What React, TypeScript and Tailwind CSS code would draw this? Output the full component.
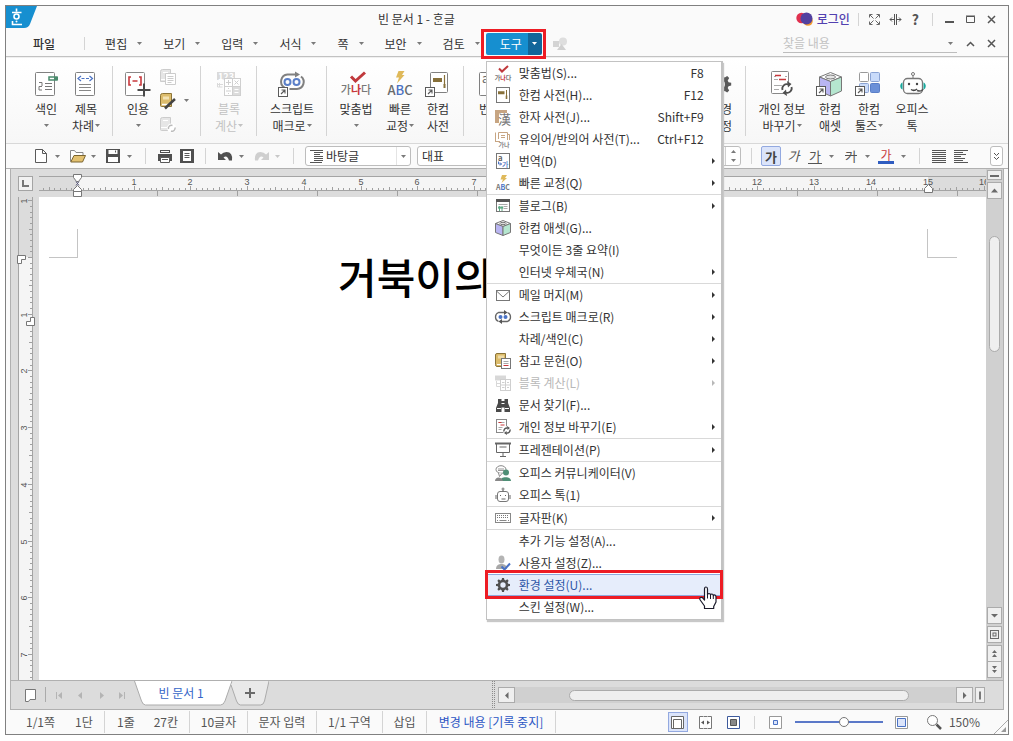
import type { ReactNode } from "react";

const INK = "#5a5a5a";

/* ---------- small shared pieces ---------- */

function Caret({ className = "text-[#7a7a7a]" }: { className?: string }) {
  return (
    <svg viewBox="0 0 5 3" className={`h-[3px] w-[5px] shrink-0 ${className}`}>
      <path d="M0 0h5L2.500 3z" fill="currentColor" />
    </svg>
  );
}

function Svg({ size = 16, children }: { size?: 16 | 28; children: ReactNode }) {
  return (
    <svg
      viewBox={size === 16 ? "0 0 16 16" : "0 0 28 28"}
      className={size === 16 ? "size-4 shrink-0 overflow-visible" : "size-7 shrink-0 overflow-visible"}
      fill="none"
      stroke={INK}
      fontFamily="Noto Sans CJK KR, sans-serif"
    >
      {children}
    </svg>
  );
}

function Shortcut({ x = 0.5, y = 16.5 }: { x?: number; y?: number }) {
  return (
    <g>
      <rect x={x} y={y} width="9" height="9" fill="#fff" />
      <path d={`M${x + 2.5} ${y + 6.5}l4-4m-3.500 0h3.500v3.500`} strokeWidth="1.1" />
    </g>
  );
}

function Rule({ className = "h-[70px] self-start mt-2" }: { className?: string }) {
  return <div className={`w-px shrink-0 bg-[#d4d4d4] ${className}`} />;
}

/* ---------- ribbon icons ---------- */

const gear =
  "M12.600 4h2.800l.6 2.700 1.800.8 2.400-1.500 2 2-1.500 2.400.8 1.800 2.700.6v2.800l-2.700.6-.8 1.800 1.500 2.400-2 2-2.400-1.500-1.800.8-.6 2.700h-2.800l-.6-2.700-1.800-.8-2.400 1.500-2-2 1.500-2.400-.8-1.800-2.700-.6v-2.800l2.700-.6.8-1.800-1.500-2.400 2-2 2.400 1.500 1.800-.8zM14 10.300a3.900 3.900 0 1 0 0 7.800 3.900 3.900 0 0 0 0-7.800z";

const big = {
  index: (
    <Svg size={28}>
      <rect x="3.500" y="2.500" width="19" height="23" rx="1" fill="#fff" stroke="#808080" />
      <path d="M7 12.500h3v3.500m-3 .5h3m-3 0v3.500h3M13 13.500h7M13 16.500h7M13 19.500h7" stroke="#777" />
      <rect x="17" y="7" width="8" height="3" fill="#fff" stroke="#4a8a6c" strokeWidth="1.500" />
      <path d="M22 8.500h4" stroke="#4a8a6c" strokeWidth="3" />
    </Svg>
  ),
  toc: (
    <Svg size={28}>
      <rect x="3.500" y="2.500" width="19" height="23" rx="1" fill="#fff" stroke="#808080" />
      <path d="M9 6L6 8.500 9 11M17.500 6l3 2.500-3 2.500M9.500 8.500h3m1.500 0h3" stroke="#4a72c4" strokeWidth="1.200" />
      <path d="M7 14.500h12M7 17.500h12M7 20.500h12" stroke="#888" />
    </Svg>
  ),
  cite: (
    <Svg size={28}>
      <rect x="1.500" y="2.500" width="19" height="23" rx="1" fill="#fff" stroke="#888" />
      <path d="M7 7H5v8h2M15 7h2v8h-2M8.500 11h5" stroke="#c8383c" strokeWidth="1.600" />
      <path d="M20 13.500v13M13.500 20h13" stroke="#4a4a4a" strokeWidth="2" />
    </Svg>
  ),
  calc: (
    <Svg size={28}>
      <rect x="2" y="2" width="18" height="8" fill="#dadada" stroke="none" />
      <text x="11" y="9.500" fontSize="9" fontWeight="700" fill="#fff" stroke="none" textAnchor="middle">123</text>
      <path d="M2.500 13v4h5m-3-4v4M2 14.500h6" stroke="#dadada" />
      <rect x="9.500" y="8.500" width="16" height="17" fill="#fff" stroke="#cfcfcf" />
      <rect x="18" y="17" width="7" height="8" fill="#dcdcdc" stroke="none" />
      <path d="M17.500 8.500v17M9.500 16.500h16M13.500 10v5M11 12.500h5M19.500 10.500l4 4m0-4l-4 4M11 21h5m-2.500-3v1m0 4v1" stroke="#cfcfcf" />
      <path d="M19.500 19.500h4m-4 3h4" stroke="#fff" />
    </Svg>
  ),
  macro: (
    <Svg size={28}>
      <path d="M6.500 17.500A7 7 0 0 1 9.500 4.500H19" stroke="#808080" strokeWidth="2" />
      <path d="M17 1.500l5 3-5 3z" fill="#808080" stroke="none" />
      <path d="M23 6.500A7 7 0 0 1 19 19h-7.500" stroke="#808080" strokeWidth="2" />
      <circle cx="9.500" cy="12" r="3" stroke="#5a7fc8" strokeWidth="2" />
      <circle cx="18.500" cy="12" r="3" stroke="#5a7fc8" strokeWidth="2" />
      <Shortcut y={17.500} />
    </Svg>
  ),
  spell: (
    <Svg size={28}>
      <path d="M9 6.500l4.500 4.500L23 2.500" stroke="#c0393c" strokeWidth="3" />
      <text x="14" y="24" fontSize="11" fontWeight="500" fill="#777" stroke="none" textAnchor="middle">
        가<tspan fill="#c8383c" fontWeight="700">나</tspan>다
      </text>
    </Svg>
  ),
  quick: (
    <Svg size={28}>
      <path d="M12.500 1h6l-2.500 4h2.500l-7.500 8.500 2-6h-3z" fill="#dfb95a" stroke="none" />
      <text x="14" y="25" fontSize="13" fontWeight="500" fill="#6a6a6a" stroke="none" textAnchor="middle">
        A<tspan fill="#4a72c4">B</tspan>C
      </text>
    </Svg>
  ),
  dict: (
    <Svg size={28}>
      <rect x="6.500" y="2.500" width="17" height="20" rx="1" fill="#fff" stroke="#808080" />
      <rect x="9" y="8" width="9" height="4" fill="#87703a" stroke="none" />
      <path d="M20.500 5v10" stroke="#87703a" strokeWidth="1.200" />
      <path d="M20.500 14v4" stroke="#87703a" strokeWidth="2" />
      <Shortcut x={1.500} y={17.500} />
    </Svg>
  ),
  translate: (
    <Svg size={28}>
      <rect x="3.500" y="2.500" width="19" height="23" rx="1" fill="#fff" stroke="#808080" />
      <text x="6" y="13" fontSize="12" fill="#666" stroke="none">a</text>
    </Svg>
  ),
  gear: (
    <Svg size={28}>
      <path d={gear} fill="#5a5a5a" stroke="none" fillRule="evenodd" />
    </Svg>
  ),
  privacy: (
    <Svg size={28}>
      <rect x="3.500" y="1.500" width="17" height="22" rx="1" fill="#fff" stroke="#888" />
      <path d="M6 6.500h2m9 0h2M6 15.500h8M6 19.500h5" stroke="#aaa" />
      <path d="M7 5.500h6M11 9.500h7" stroke="#c8383c" strokeWidth="1.300" />
      <path d="M6 9.500h4" stroke="#aaa" />
      <circle cx="19" cy="18.500" r="6" fill="#fff" stroke="none" />
      <path d="M14.500 20a4.500 4.500 0 0 1 6-5.500M23.500 17a4.500 4.500 0 0 1-6 5.500" stroke="#4f4f4f" strokeWidth="1.800" />
      <path d="M19 11l4.500 3-3.500 3.500zM19 26l-4.500-3 3.500-3.500z" fill="#4f4f4f" stroke="none" />
    </Svg>
  ),
  asset: (
    <Svg size={28}>
      <path d="M3.500 7L14.500 2.500 25.500 7 14.500 11.500z" fill="#fff" stroke="#777" />
      <path d="M3.500 7l11 4.500V26l-11-5z" fill="#b9b5f2" stroke="#777" />
      <path d="M25.500 7l-11 4.500V26l11-5z" fill="#b5e6cf" stroke="#777" />
      <ellipse cx="14.500" cy="7" rx="5" ry="2" fill="#e4e4e4" stroke="#777" />
      <Shortcut />
    </Svg>
  ),
  tools: (
    <Svg size={28}>
      <rect x="4.500" y="2.500" width="9" height="9" rx="1" fill="#fff" stroke="#999" />
      <rect x="15.500" y="2.500" width="9" height="9" rx="1" fill="#c9dbfa" stroke="#8aa3d4" />
      <rect x="4.500" y="13.500" width="9" height="9" rx="1" fill="#c9dbfa" stroke="#8aa3d4" />
      <rect x="15.500" y="13.500" width="9" height="9" rx="1" fill="#6b90d8" stroke="#5a7fc8" />
      <Shortcut />
    </Svg>
  ),
  robot: (
    <Svg size={28}>
      <circle cx="15" cy="4" r="1.500" stroke="#777" />
      <path d="M15 5.500v3" stroke="#777" />
      <rect x="5.500" y="8.500" width="19" height="15" rx="4" fill="#fff" stroke="#777" strokeWidth="1.300" />
      <circle cx="11" cy="14" r="1.200" fill="#444" stroke="none" />
      <circle cx="19" cy="14" r="1.200" fill="#444" stroke="none" />
      <path d="M13 19.500q3 2 6-.5" stroke="#444" strokeWidth="1.500" />
      <path d="M4.500 12.500c-3 1-3 6 0 7zM25.500 12.500c3 1 3 6 0 7z" fill="#18a89c" stroke="none" />
      <path d="M25 19c-.5 2-3 2.500-6 1.500" stroke="#555" strokeWidth="1.500" />
    </Svg>
  ),
};

function RibbonButton({
  icon,
  lines,
  caret,
  width,
  disabled,
}: {
  icon: ReactNode;
  lines: string[];
  caret?: boolean;
  width: string;
  disabled?: boolean;
}) {
  return (
    <button
      disabled={disabled}
      className={`flex shrink-0 flex-col items-center self-start whitespace-nowrap pt-3 leading-[17px] ${width} ${disabled ? "text-[#c2c2c2]" : ""}`}
    >
      {icon}
      <span className="mt-[2px]">{lines[0]}</span>
      <span className="flex h-[17px] items-center gap-px">
        {lines[1]}
        {caret && <Caret className={disabled ? "text-[#c2c2c2]" : "text-[#7a7a7a]"} />}
      </span>
    </button>
  );
}

/* ---------- tools menu ---------- */

const small: Record<string, ReactNode> = {
  spell: (
    <Svg>
      <path d="M4 3.500L7 6.500 13 1" stroke="#c0393c" strokeWidth="2" />
      <text x="8" y="14.500" fontSize="6" fontWeight="700" fill="#777" stroke="none" textAnchor="middle">
        가<tspan fill="#c8383c">나</tspan>다
      </text>
    </Svg>
  ),
  dict: (
    <Svg>
      <rect x="1.500" y=".5" width="13" height="15" fill="#fff" stroke="#777" />
      <path d="M3 5h6.500M3 6.500h6.500" stroke="#87703a" strokeWidth="1.300" />
      <path d="M11.500 3v8" stroke="#87703a" />
      <path d="M11.500 8.500v3.500" stroke="#87703a" strokeWidth="1.600" />
    </Svg>
  ),
  hanja: (
    <Svg>
      <path d="M0 1h12v3H4v10H0z" fill="#c7a582" stroke="none" />
      <text x="3" y="14.500" fontSize="13" fill="#777" stroke="none">漢</text>
    </Svg>
  ),
  thesaurus: (
    <Svg>
      <path d="M.5 11V1.500M3.500 8V1.500h9V9M6 4.500h4M6 6.500h4M12 3.500h2.500V9M1 10.500h4" stroke="#c7a582" />
      <text x="9" y="15.500" fontSize="6" fontWeight="700" fill="#888" stroke="none" textAnchor="middle">가나</text>
    </Svg>
  ),
  translate: (
    <Svg>
      <rect x="1.500" y=".5" width="13" height="15" fill="#fff" stroke="#777" />
      <text x="3" y="7.500" fontSize="8" fontWeight="500" fill="#555" stroke="none">a</text>
      <text x="7" y="14" fontSize="7" fontWeight="500" fill="#4a72c4" stroke="none">가</text>
      <path d="M3.500 8.500v2.500h3m-1.500-1.500l1.500 1.500-1.500 1.500" stroke="#4a72c4" />
    </Svg>
  ),
  quick: (
    <Svg>
      <path d="M7 0h5l-2 3h2L6.500 8 8 4.500H5.500z" fill="#dfb95a" stroke="none" />
      <text x="8" y="15" fontSize="7" fontWeight="700" fill="#777" stroke="none" textAnchor="middle">
        A<tspan fill="#4a72c4">B</tspan>C
      </text>
    </Svg>
  ),
  blog: (
    <Svg>
      <rect x="1.500" y="1.500" width="13" height="12" fill="#fff" stroke="#777" />
      <path d="M1 2.500h14" stroke="#555" strokeWidth="3" />
      <path d="M3.500 6.500h9M8.500 8.500h4M8.500 10.500h4" stroke="#aaa" />
      <circle cx="4.500" cy="9.500" r="1.500" fill="#5aa882" stroke="none" />
      <circle cx="7" cy="9.500" r="1.200" fill="#5aa882" stroke="none" />
      <path d="M4.500 10v3M7 10v3" stroke="#5aa882" />
    </Svg>
  ),
  asset: (
    <Svg>
      <path d="M.5 3.500L8 .5l7.500 3L8 6.500z" fill="#fff" stroke="#777" />
      <path d="M.5 3.500L8 6.500v9l-7.500-3z" fill="#b9b5f2" stroke="#777" />
      <path d="M15.500 3.500L8 6.500v9l7.500-3z" fill="#b5e6cf" stroke="#777" />
      <ellipse cx="8" cy="3.500" rx="3" ry="1.200" fill="#ddd" stroke="#777" />
    </Svg>
  ),
  mail: (
    <Svg>
      <rect x="1.500" y="3.500" width="13" height="10" fill="#fff" stroke="#777" />
      <path d="M1.500 4L8 10l6.500-6" stroke="#777" />
    </Svg>
  ),
  macro: (
    <Svg>
      <path d="M3.500 12.500C-.5 11-.5 5 3.500 3.500H10M12.500 3.500c4 1.500 4 7.500 0 9H6" stroke="#666" strokeWidth="1.300" />
      <path d="M9 1l3.500 2.500L9 6zM7 10l-3.500 2.500L7 15z" fill="#555" stroke="none" />
      <circle cx="5.500" cy="8" r="2" fill="#4a72c4" stroke="none" />
      <circle cx="10.500" cy="8" r="2" fill="#4a72c4" stroke="none" />
    </Svg>
  ),
  refs: (
    <Svg>
      <path d="M.5 11.500V2q0-1.500 1.500-1.500h8.500v13H2q-1.500 0-1.500-2z" fill="#dcbc6c" stroke="#8c7438" />
      <path d="M2 11.500h7" stroke="#fff" />
      <rect x="3" y="2.500" width="6" height="3" fill="#efdca8" stroke="none" />
      <rect x="6.500" y="5.500" width="9" height="10" fill="#fff" stroke="#777" />
      <path d="M8.500 8.500h5M8.500 10.500h5" stroke="#aaa" />
      <path d="M8.500 12.500h5" stroke="#c8383c" />
    </Svg>
  ),
  calc: (
    <Svg>
      <path d="M0 .5h11v5H0z" fill="#d8d8d8" stroke="none" />
      <path d="M1.500 6v5.500H5M1 8.500h4" stroke="#d8d8d8" />
      <rect x="5.500" y="4.500" width="10" height="11" fill="#fff" stroke="#cfcfcf" />
      <path d="M10.500 4.500v11M5.500 10h10M7 7.500h2.500M12 7.500h2M7 12.500h2.500m2.500 0h2" stroke="#cfcfcf" />
    </Svg>
  ),
  find: (
    <Svg>
      <path d="M3 2h3.500v2H9.500V2H13v4l2 5v4h-5.500v-4.500h-3V15H1v-4l2-5z" fill="#4a4a4a" stroke="none" />
      <path d="M2 11.500h4M10 11.500h4M6.500 6.500h3" stroke="#fff" />
    </Svg>
  ),
  privacy: (
    <Svg>
      <rect x="1.500" y=".5" width="10" height="13" fill="#fff" stroke="#888" />
      <path d="M3.500 3.500h6M3.500 8.500h4M3.500 10.500h3" stroke="#aaa" />
      <path d="M3.500 3.500h3M5.500 6h4" stroke="#c8383c" />
      <circle cx="12" cy="11.500" r="4.200" fill="#fff" stroke="none" />
      <path d="M9 12.500a3 3 0 0 1 3.500-3.500M15 10.500a3 3 0 0 1-3.500 3.500" stroke="#555" strokeWidth="1.400" />
      <path d="M12 7l3 2-2.500 2zM12 16l-3-2 2.500-2z" fill="#555" stroke="none" />
    </Svg>
  ),
  present: (
    <Svg>
      <path d="M0 1.500h16" stroke="#666" strokeWidth="2" />
      <path d="M1.500 2v8.500h13V2M4.500 5h7M8 10.500v3.500M5 14.500h6" stroke="#666" />
    </Svg>
  ),
  comm: (
    <Svg>
      <ellipse cx="6" cy="4.500" rx="5" ry="3.800" fill="#fff" stroke="#888" />
      <path d="M3 4h6M3 5.500h6" stroke="#999" />
      <circle cx="11" cy="7.500" r="3" fill="#4f8f76" stroke="none" />
      <path d="M5 16c0-5 11-5 11 0z" fill="#4f8f76" stroke="none" />
      <path d="M0 16c0-4 6-5 8 0z" fill="#888" stroke="none" />
      <path d="M3.500 8l1 3.500 2.500-3" fill="#fff" stroke="#888" />
    </Svg>
  ),
  robot: (
    <Svg>
      <circle cx="8" cy="2" r="1" stroke="#777" />
      <rect x="2.500" y="4.500" width="11" height="10" rx="2.500" fill="#fff" stroke="#777" />
      <path d="M1 8v4M15 8v4M5 8.500h1M10 8.500h1M6.500 12h4M8 3v1.500" stroke="#666" />
    </Svg>
  ),
  keyboard: (
    <Svg>
      <rect x=".5" y="3.500" width="15" height="9" fill="#fff" stroke="#888" />
      <path d="M2 5.500h12M2 7.500h12" stroke="#777" strokeDasharray="1 1" />
      <path d="M2 10.500h1m1.500 0h7m1.500 0h1" stroke="#888" />
    </Svg>
  ),
  user: (
    <Svg>
      <ellipse cx="6.500" cy="4.500" rx="3" ry="4" fill="#b4b4b4" stroke="none" />
      <path d="M1 14c0-4 3-5 5.500-5S12 10 12 14z" fill="#a8a8a8" stroke="none" />
      <path d="M6.500 11.500l3 3 5.500-6" stroke="#4a72c4" strokeWidth="2" />
    </Svg>
  ),
  gear: (
    <svg viewBox="4 4 20 20.400" className="size-4 shrink-0 p-px">
      <path d={gear} fill="#505050" fillRule="evenodd" />
    </svg>
  ),
};

type Item = { label: string; icon?: string; keys?: string; sub?: boolean; off?: boolean; active?: boolean };

const menuGroups: Item[][] = [
  [
    { label: "맞춤법(S)...", icon: "spell", keys: "F8" },
    { label: "한컴 사전(H)...", icon: "dict", keys: "F12" },
    { label: "한자 사전(J)...", icon: "hanja", keys: "Shift+F9" },
    { label: "유의어/반의어 사전(T)...", icon: "thesaurus", keys: "Ctrl+F12" },
    { label: "번역(D)", icon: "translate", sub: true },
    { label: "빠른 교정(Q)", icon: "quick", sub: true },
  ],
  [
    { label: "블로그(B)", icon: "blog", sub: true },
    { label: "한컴 애셋(G)...", icon: "asset" },
    { label: "무엇이든 3줄 요약(I)" },
    { label: "인터넷 우체국(N)", sub: true },
  ],
  [
    { label: "메일 머지(M)", icon: "mail", sub: true },
    { label: "스크립트 매크로(R)", icon: "macro", sub: true },
    { label: "차례/색인(C)", sub: true },
    { label: "참고 문헌(O)", icon: "refs", sub: true },
    { label: "블록 계산(L)", icon: "calc", sub: true, off: true },
    { label: "문서 찾기(F)...", icon: "find" },
    { label: "개인 정보 바꾸기(E)", icon: "privacy", sub: true },
  ],
  [{ label: "프레젠테이션(P)", icon: "present", sub: true }],
  [
    { label: "오피스 커뮤니케이터(V)", icon: "comm" },
    { label: "오피스 톡(1)", icon: "robot" },
  ],
  [{ label: "글자판(K)", icon: "keyboard", sub: true }],
  [
    { label: "추가 기능 설정(A)..." },
    { label: "사용자 설정(Z)...", icon: "user" },
    { label: "환경 설정(U)...", icon: "gear", active: true },
    { label: "스킨 설정(W)..." },
  ],
];

function HandCursor() {
  return (
    <svg viewBox="0 0 18 24" className="pointer-events-none absolute right-1 top-[12px] z-20 h-6 w-[18px]">
      <path
        d="M5.500 14V3q0-2 1.500-2t1.500 2v6q.2-1.500 1.500-1.500T11.500 9q.3-1 1.400-1T14.300 9.700q.3-.8 1.200-.8 1.500 0 1.500 2V16l-2.300 4.500V22.500H5.500V20L1.200 14q-1-1.800.4-2.500t2.500.8z"
        fill="#fff"
        stroke="#1a1a2a"
        strokeWidth="1.200"
        strokeLinejoin="round"
      />
      <path d="M8.500 8v4.500M11.500 9v4M14.300 10v3" stroke="#1a1a2a" />
    </svg>
  );
}

function ToolsMenu() {
  return (
    <div
      role="menu"
      className="absolute left-0 top-full z-10 mt-[6px] w-[237px] border border-r-2 border-[#c2c2c2] bg-white pb-px shadow-[1px_2px_1px_#c8c8c8]"
    >
      {menuGroups.map((group, g) => (
        <div key={g} role="group" className={g ? "border-t border-[#d9d9d9]" : ""}>
          {group.map((item) => (
            <div key={item.label} className="relative">
              <button
                role="menuitem"
                disabled={item.off}
                className={`flex h-[22px] w-full items-center whitespace-nowrap pl-2 ${
                  item.active
                    ? "bg-[#e6edfb] text-[#2f57a8] shadow-[inset_0_0_0_1px_#8fa8dc]"
                    : item.off
                      ? "text-[#b8b8b8]"
                      : "text-[#333]"
                }`}
              >
                <span className="mr-2 size-4">{item.icon && small[item.icon]}</span>
                <span className="flex-1 text-left">{item.label}</span>
                {item.keys && <span className="pr-[17px]">{item.keys}</span>}
                {item.sub && (
                  <svg viewBox="0 0 3 6" className="mr-[6px] h-[6px] w-[3px]">
                    <path d="M0 0l3 3-3 3z" fill="currentColor" />
                  </svg>
                )}
              </button>
              {item.active && (
                <>
                  <div className="pointer-events-none absolute -bottom-[3px] -left-[2px] -right-[2px] -top-1 z-10 border-[3px] border-[#ed1c24]" />
                  <HandCursor />
                </>
              )}
            </div>
          ))}
        </div>
      ))}
    </div>
  );
}

/* ---------- title and menu bar ---------- */

function TitleBar() {
  return (
    <header className="flex h-[26px] items-center">
      <svg viewBox="0 0 31 22" className="h-[22px] w-[31px] shrink-0 self-start">
        <path d="M0 0h31l-7 18q-1.500 4-6 4H0z" fill="#168fd0" />
        <path d="M10.500 2.500v3M6 6.500h9.500M6.500 15v3.500h9.500" stroke="#fff" strokeWidth="1.600" fill="none" />
        <circle cx="10.500" cy="10.500" r="2.500" stroke="#fff" strokeWidth="1.600" fill="none" />
        <circle cx="10.500" cy="15.500" r="1" fill="#fff" />
      </svg>
      <div className="flex-1 text-center">빈 문서 1 - {"\u1112\u119e\u11ab"}글</div>
      <button className="flex items-center gap-1 font-medium text-[#5240b0]">
        <svg viewBox="0 0 17 14" className="h-[14px] w-[17px]">
          <circle cx="5.500" cy="6" r="5.200" fill="#e0304e" />
          <circle cx="12" cy="9" r="4.800" fill="#f39a2d" />
          <circle cx="10.500" cy="6.500" r="6" fill="#5240a0" />
        </svg>
        로그인
      </button>
      <Rule className="ml-2 mr-[9px] h-[13px]" />
      <button aria-label="전체 화면" className="mr-2">
        <svg viewBox="0 0 13 13" className="size-[13px]" fill="none" stroke="#666">
          <path d="M1.500 4.500v-3h3M8.500 1.500h3v3M11.500 8.500v3h-3M4.500 11.500h-3v-3M2 2l3.500 3.500M11 2L7.500 5.500M11 11L7.500 7.500M2 11l3.500-3.500" />
        </svg>
      </button>
      <button aria-label="창 나누기" className="mr-[10px]">
        <svg viewBox="0 0 13 11" className="h-[11px] w-[13px]" fill="none" stroke="#555">
          <path d="M5.500 0v11M7.500 0v11M1 5.500h4M8 5.500h4M3 3.500l-2 2 2 2M10 3.500l2 2-2 2" />
        </svg>
      </button>
      <button aria-label="도움말" className="text-[14px] font-bold leading-4 text-[#555]">?</button>
      <Rule className="ml-[13px] mr-3 h-[13px]" />
      <button aria-label="최소화" className="mr-3">
        <svg viewBox="0 0 9 10" className="h-[10px] w-[9px]">
          <path d="M0 8h9" stroke="#555" strokeWidth="2" />
        </svg>
      </button>
      <button aria-label="최대화" className="mr-3">
        <svg viewBox="0 0 9 9" className="size-[9px]" fill="none" stroke="#555">
          <path d="M.5 1.500h8v6h-8zM0 1h9" />
        </svg>
      </button>
      <button aria-label="닫기" className="mr-3">
        <svg viewBox="0 0 9 9" className="size-[9px]">
          <path d="M1 1l7 7M8 1L1 8" stroke="#555" strokeWidth="1.500" />
        </svg>
      </button>
    </header>
  );
}

const menus = ["편집", "보기", "입력", "서식", "쪽", "보안", "검토"];

function MenuBar() {
  return (
    <nav className="flex h-[25px] items-center border-b border-[#c2c2c2] pb-px">
      <button className="pl-[27px] font-medium">파일</button>
      <Rule className="ml-[29px] mr-[10px] h-[13px]" />
      {menus.map((m) => (
        <button key={m} className="flex shrink-0 items-center gap-[10px] whitespace-nowrap pl-[10px] pr-[11px]">
          {m}
          <Caret />
        </button>
      ))}
      <div className="relative -ml-[5px] shrink-0">
        <div className="flex h-[22px] overflow-hidden rounded-[2px] text-white">
          <button className="w-[42px] bg-[#168fd0] pl-2">도구</button>
          <button aria-label="도구 메뉴" className="flex w-[14px] items-center justify-center bg-[#12669a]">
            <Caret className="text-white" />
          </button>
        </div>
        <ToolsMenu />
        <div className="pointer-events-none absolute -bottom-1 -left-[5px] -right-1 -top-1 z-20 border-[3px] border-[#ed1c24]" />
      </div>
      <svg viewBox="0 0 14 14" className="ml-[11px] h-[14px] w-[14px]">
        <path d="M0 4h6v6H0z" fill="#d4d4d4" />
        <circle cx="10" cy="4.500" r="4" fill="#dedede" />
        <path d="M8.500 7l4.500 6H4z" fill="#d0d0d0" />
      </svg>
      <div className="ml-auto flex h-[18px] w-[174px] items-center border-b border-[#bdbdbd]">
        <input aria-label="찾을 내용" placeholder="찾을 내용" className="w-full min-w-0 bg-transparent outline-none placeholder:text-[#c2c2c2]" />
        <button aria-label="찾기 목록" className="px-1">
          <Caret />
        </button>
      </div>
      <button aria-label="메뉴 접기" className="ml-[9px] mr-3">
        <svg viewBox="0 0 9 6" className="h-[6px] w-[9px]" fill="none">
          <path d="M1 5l3.500-3.500L8 5" stroke="#555" strokeWidth="1.500" />
        </svg>
      </button>
      <button aria-label="문서 닫기" className="mr-3">
        <svg viewBox="0 0 9 9" className="size-[9px]">
          <path d="M1 1l7 7M8 1L1 8" stroke="#555" strokeWidth="1.500" />
        </svg>
      </button>
    </nav>
  );
}

function Ribbon() {
  return (
    <div className="flex h-[87px] border-b border-[#d8d8d8] bg-linear-to-b from-white to-[#f7f7f7] pl-5 pt-px shadow-[inset_0_1px_0_#f0f0f0]">
      <RibbonButton icon={big.index} lines={["색인", ""]} caret width="w-10" />
      <RibbonButton icon={big.toc} lines={["제목", "차례"]} caret width="w-10" />
      <Rule className="ml-[6px] mr-[5px] mt-2 h-[70px]" />
      <RibbonButton icon={big.cite} lines={["인용", ""]} caret width="w-10" />
      <div className="ml-[2px] flex shrink-0 flex-col gap-2 pt-[11px]">
        <button aria-label="각주" className="h-4">
          <Svg>
            <path d="M.5 12.500v-10q0-2 2-2h8v12z" fill="#e6e6e6" stroke="#ccc" />
            <path d="M3 3.500h5M1 10.500h6" stroke="#fff" />
            <path d="M5.500 4.500h10v11h-10z" fill="#fff" stroke="#ccc" />
            <path d="M7.500 7.500h6M7.500 9.500h6M7.500 11.500h6M7.500 13.500h4" stroke="#ccc" />
          </Svg>
        </button>
        <button aria-label="참고 문헌 편집" className="h-4">
          <Svg>
            <path d="M.5 12.500v-10q0-2 2-2h9v13h-10q-1 0-1-1z" fill="#dcbc6c" stroke="#8c7438" />
            <path d="M3 3.500h6v3H3z" fill="#f2e2b4" stroke="none" />
            <path d="M2 11.500h7" stroke="#fff" strokeWidth="1.500" />
            <path d="M15 6l-7 6.500-3 3" stroke="#444" strokeWidth="2.500" />
          </Svg>
        </button>
        <button aria-label="참고 문헌 새로 고침" className="h-4">
          <Svg>
            <path d="M.5 12.500v-10q0-2 2-2h8v13h-9q-1 0-1-1z" fill="#e6e6e6" stroke="#ccc" />
            <path d="M3 3.500h5M1 10.500h6" stroke="#fff" />
            <circle cx="11.500" cy="11" r="4.500" fill="#fff" stroke="none" />
            <path d="M8.500 12a3 3 0 0 1 4-3.500M15 10.500a3 3 0 0 1-4 3.500" stroke="#bbb" strokeWidth="1.500" />
          </Svg>
        </button>
      </div>
      <button aria-label="참고 문헌 목록" className="ml-2 mt-[41px] h-[3px]">
        <Caret />
      </button>
      <Rule className="ml-[11px] mr-2 mt-2 h-[70px]" />
      <RibbonButton icon={big.calc} lines={["블록", "계산"]} caret width="w-10" disabled />
      <Rule className="ml-[7px] mr-[5px] mt-2 h-[70px]" />
      <RibbonButton icon={big.macro} lines={["스크립트", "매크로"]} caret width="w-[60px]" />
      <Rule className="ml-1 mr-[9px] mt-2 h-[70px]" />
      <RibbonButton icon={big.spell} lines={["맞춤법", ""]} caret width="w-10" />
      <div className="ml-1 flex">
        <RibbonButton icon={big.quick} lines={["빠른", "교정"]} caret width="w-10" />
        <RibbonButton icon={big.dict} lines={["한컴", "사전"]} width="w-9" />
      </div>
      <Rule className="ml-[7px] mr-[6px] mt-2 h-[70px]" />
      <RibbonButton icon={big.translate} lines={["번역", ""]} caret width="w-10" />
      <div className="ml-[191px] flex">
        <RibbonButton icon={big.gear} lines={["환경", "설정"]} width="w-10" />
        <Rule className="ml-1 mr-2 mt-2 h-[70px]" />
        <RibbonButton icon={big.privacy} lines={["개인 정보", "바꾸기"]} caret width="w-14" />
        <RibbonButton icon={big.asset} lines={["한컴", "애셋"]} width="w-10" />
        <RibbonButton icon={big.tools} lines={["한컴", "툴즈"]} caret width="w-[38px]" />
        <RibbonButton icon={big.robot} lines={["오피스", "톡"]} width="w-12" />
      </div>
    </div>
  );
}

/* ---------- formatting toolbar ---------- */

function TB({ label, children, caret, dim }: { label: string; children: ReactNode; caret?: boolean; dim?: boolean }) {
  return (
    <button aria-label={label} className="flex shrink-0 items-center gap-[5px]">
      {children}
      {caret && <Caret className={dim ? "text-[#c8c8c8]" : "text-[#7a7a7a]"} />}
    </button>
  );
}

function Toolbar() {
  const bar = "h-[16px]";
  return (
    <div className="flex h-6 items-center pl-7">
      <div className="flex items-center gap-[10px]">
        <TB label="새 문서" caret>
          <Svg>
            <path d="M1.500 1.500h7l4 4v9h-11zM8.500 1.500v4h4" fill="#fff" />
          </Svg>
        </TB>
        <TB label="불러오기" caret>
          <Svg>
            <path d="M.5 13.500v-11h4l1.500 2h7v3" fill="#fff" stroke="#888" />
            <path d="M4 7.500h11.500l-3 6.500H.8z" fill="#e3c170" stroke="#7b6530" />
          </Svg>
        </TB>
        <TB label="저장하기" caret>
          <Svg>
            <path d="M0 1h14v14H0z" fill="#505050" stroke="none" />
            <path d="M2.500 2h9v4h-9zM2 9h10v5H2z" fill="#fff" stroke="none" />
            <path d="M9.500 2.500v2" />
          </Svg>
        </TB>
      </div>
      <Rule className={`ml-[13px] mr-3 ${bar}`} />
      <div className="flex items-center gap-[6px]">
        <TB label="인쇄">
          <Svg>
            <path d="M0 6h14v7H0zM2 2h10v3H2z" fill="#505050" stroke="none" />
            <path d="M3 3.500h8" stroke="#fff" />
            <path d="M2.500 9.500h9v5h-9z" fill="#fff" />
            <path d="M4 11.500h6" />
          </Svg>
        </TB>
        <TB label="미리 보기">
          <Svg>
            <path d="M0 1h14v14H0z" fill="#505050" stroke="none" />
            <path d="M3 3h8v10H3z" fill="#fff" stroke="none" />
            <path d="M4.500 5.500h5M4.500 7.500h5M4.500 9.500h5" />
          </Svg>
        </TB>
      </div>
      <Rule className={`ml-[9px] mr-3 ${bar}`} />
      <div className="flex items-center gap-[10px]">
        <TB label="되돌리기" caret>
          <Svg>
            <path d="M0 4v8h8L5.500 9.500Q9 6.500 11 12.500h3Q15 4 8.500 4 5 4 3 6.500z" fill="#505050" stroke="none" />
          </Svg>
        </TB>
        <TB label="다시 실행" caret dim>
          <Svg>
            <path d="M15 4v8H7l2.500-2.500Q6 6.500 4 12.500H1Q0 4 6.500 4 10 4 12 6.500z" fill="#cfcfcf" stroke="none" />
          </Svg>
        </TB>
      </div>
      <Rule className={`ml-[13px] mr-[11px] ${bar}`} />
      <div className="relative flex h-5 w-[106px] shrink-0 items-center rounded-[3px] border border-[#bdbdbd] bg-white pl-1">
        <svg viewBox="0 0 13 13" className="size-[13px] shrink-0" stroke="#555">
          <path d="M0 .5h13M4 2.500h9M4 4.500h6M4 6.500h9M4 8.500h9M4 10.500h9M0 12.500h12" />
        </svg>
        <select aria-label="스타일" className="h-full min-w-0 flex-1 appearance-none bg-transparent pl-[3px] outline-none">
          <option>바탕글</option>
        </select>
        <span className="pointer-events-none flex h-full w-[14px] items-center border-l border-[#e4e4e4] pl-1">
          <Caret />
        </span>
      </div>
      <select aria-label="언어" className="ml-[6px] h-5 w-[90px] shrink-0 appearance-none rounded-[3px] border border-[#bdbdbd] bg-white pl-1 outline-none">
        <option>대표</option>
      </select>
      <div className="ml-[174px] flex h-5 w-[60px] shrink-0 rounded-[3px] border border-[#bdbdbd] bg-white">
        <input aria-label="줄 간격" className="w-0 min-w-0 flex-1 outline-none" />
        <div className="flex w-[15px] flex-col items-center justify-between border-l border-[#cfcfcf] py-[3px]">
          <button aria-label="늘리기" className="flex rotate-180">
            <Caret />
          </button>
          <button aria-label="줄이기" className="flex">
            <Caret />
          </button>
        </div>
      </div>
      <Rule className={`ml-[10px] mr-[9px] ${bar}`} />
      <button aria-label="진하게" className="h-5 w-5 shrink-0 rounded-[2px] border border-[#93a9e0] bg-[#dbe4fa] text-center text-[13px] leading-[17px] font-bold text-[#444]">
        가
      </button>
      <button aria-label="기울임" className="ml-[6px] w-[13px] text-[13px] italic text-[#555]">가</button>
      <button aria-label="밑줄" className="ml-2 flex items-center gap-[7px] text-[13px] text-[#555]">
        <span className="w-[14px] border-b border-[#555] leading-[15px]">가</span>
        <Caret />
      </button>
      <button aria-label="취소선" className="ml-[10px] flex items-center gap-[7px] text-[13px] text-[#555]">
        <span className="w-[14px] text-center line-through">가</span>
        <Caret />
      </button>
      <button aria-label="글자 색" className="ml-2 flex items-center gap-[7px] text-[#c8383c]">
        <span className="w-4 border-b-[3px] border-[#2f5cc0] text-center leading-[13px]">가</span>
        <Caret />
      </button>
      <Rule className={`ml-[13px] mr-3 ${bar}`} />
      <TB label="양쪽 정렬">
        <svg viewBox="0 0 14 13" className="h-[13px] w-[14px]" stroke="#555">
          <path d="M0 .5h14M0 2.500h14M0 4.500h14M0 6.500h14M0 8.500h14M0 10.500h14M0 12.500h14" />
        </svg>
      </TB>
      <div className="ml-2 flex">
        <TB label="왼쪽 정렬">
          <svg viewBox="0 0 14 13" className="h-[13px] w-[14px]" stroke="#555">
            <path d="M0 .5h14M0 2.500h9M0 4.500h12M0 6.500h7M0 8.500h11M0 10.500h9M0 12.500h14" />
          </svg>
        </TB>
      </div>
      <button aria-label="도구 더 보기" className="ml-auto mr-[5px] flex h-5 w-[13px] items-center justify-center rounded-[3px] border border-[#bdbdbd] bg-white">
        <svg viewBox="0 0 7 9" className="h-[9px] w-[7px]" fill="none" stroke="#555">
          <path d="M1 1l2.500 2.500L6 1M1 5l2.500 2.500L6 5" />
        </svg>
      </button>
    </div>
  );
}

/* ---------- workspace ---------- */

const UNIT = 56.7;

function HRuler() {
  const ticks: ReactNode[] = [];
  for (let i = -6; i < 340; i++) {
    const x = 38 + Math.round((i * UNIT) / 10);
    const h = i % 10 === 0 ? 4 : i % 5 === 0 ? 3 : 2;
    ticks.push(<rect key={i} x={x} y={14 - h} width="1" height={h} fill="#a0a0a0" />);
  }
  return (
    <div className="relative h-[21px]">
      <svg className="h-[21px] w-full" fontFamily="Liberation Sans, sans-serif">
        <rect width="100%" height="15" fill="#dcdcdc" />
        <rect x="38" width="851" height="15" fill="#f5f5f5" />
        <rect width="100%" height="1" fill="#a4a4a4" />
        <rect y="14" width="100%" height="1" fill="#a4a4a4" />
        {ticks}
        {Array.from({ length: 16 }, (_, n) => n + 1).map((n) => (
          <text key={n} x={38 + Math.round(n * UNIT)} y="9" fontSize="9" fill="#555" textAnchor="middle">
            {n}
          </text>
        ))}
        {Array.from({ length: 24 }, (_, n) => (
          <rect key={n} x={118 + n * 80} y="15" width="1" height="5" fill="#a0a0a0" />
        ))}
      </svg>
      <svg viewBox="0 0 9 23" className="absolute -top-[2px] left-[34px] h-[23px] w-[9px]" fill="#fff" stroke="#777">
        <path d="M.5.500h8v3l-3 4h-2l-3-4zM4.500 11.500l4 4v2h-8v-2zM.5 17.500h8v5h-8z" />
        <path d="M3 7.500l3 4m0-4l-3 4" stroke="#557" />
      </svg>
      <svg viewBox="0 0 9 9" className="absolute left-[885px] top-2 size-[9px]" fill="#fff" stroke="#777">
        <path d="M4.500.500l4 4v4h-8v-4z" />
      </svg>
    </div>
  );
}

function VRuler() {
  const ticks: ReactNode[] = [];
  for (let i = -10; i < 200; i++) {
    const y = 60 + Math.round((i * UNIT) / 10);
    const w = i % 10 === 0 ? 4 : i % 5 === 0 ? 3 : 2;
    ticks.push(<rect key={i} x={14 - w} y={y} width={w} height="1" fill="#a0a0a0" />);
  }
  return (
    <div className="relative mt-[6px] h-0 min-h-0 w-[15px] flex-1">
      <svg className="size-full" fontFamily="Liberation Sans, sans-serif">
        <rect width="15" height="100%" fill="#f5f5f5" />
        <rect width="15" height="60" fill="#dcdcdc" />
        <rect width="1" height="100%" fill="#a4a4a4" />
        <rect x="14" width="1" height="100%" fill="#a4a4a4" />
        {ticks}
        {[-1, 1, 2, 3, 4, 5, 6, 7].map((n) => (
          <text key={n} fontSize="9" fill="#555" textAnchor="middle" transform={`translate(9 ${61 + Math.round(n * UNIT)}) rotate(-90)`}>
            {Math.abs(n)}
          </text>
        ))}
      </svg>
      <svg viewBox="0 0 9 9" className="absolute -left-px top-[58px] size-[9px]" fill="#fff" stroke="#777">
        <path d="M.5.500h8v4h-4v4h-4z" />
      </svg>
      <svg viewBox="0 0 9 9" className="absolute left-2 top-[120px] size-[9px]" fill="#fff" stroke="#777">
        <path d="M4.500.500h4v8h-8v-4h4z" />
      </svg>
    </div>
  );
}

function ScrollBtn({ label, d, className }: { label: string; d: string; className: string }) {
  return (
    <button aria-label={label} className={`flex shrink-0 items-center justify-center border border-[#ababab] bg-[#efefef] ${className}`}>
      <svg viewBox="0 0 9 9" className="size-[9px]" fill="#6a6a6a">
        <path d={d} />
      </svg>
    </button>
  );
}

function Workspace() {
  return (
    <div className="flex min-h-0 flex-1 border-t border-[#b0b0b0] px-1">
      <div className="flex min-w-0 flex-1 flex-col border-x border-b border-[#b0b0b0] bg-[#dcdcdc]">
        <div className="flex min-h-0 flex-1">
          <div className="flex w-7 shrink-0 flex-col pl-[7px] pt-[7px]">
            <button aria-label="탭 종류" className="flex size-[15px] items-center justify-center border border-[#a4a4a4] bg-[#f2f2f2]">
              <svg viewBox="0 0 7 7" className="size-[7px]">
                <path d="M1 0v6h6" stroke="#777" strokeWidth="2" fill="none" />
              </svg>
            </button>
            <VRuler />
          </div>
          <div className="flex min-w-0 flex-1 flex-col overflow-hidden pt-[7px]">
            <HRuler />
            <main className="relative flex-1 bg-white pl-[299px] pt-[55px]">
              <div className="absolute left-[10px] top-8 h-[29px] w-[29px] border-b border-r border-[#c4c4c4]" />
              <div className="absolute left-[888px] top-8 h-[29px] w-[30px] border-b border-l border-[#c4c4c4]" />
              <h1 className="text-[42px] font-medium leading-[48px] text-black">거북이의</h1>
            </main>
          </div>
          <div className="flex w-[17px] shrink-0 flex-col bg-[#d0d0d0] pb-[2px] pl-px pr-px pt-px">
            <ScrollBtn label="화면 나누기" d="M0 4h9v2H0z" className="h-[10px]" />
            <ScrollBtn label="위로" d="M4.500 2.500l3.500 4H1z" className="mt-[2px] h-[17px]" />
            <div className="flex min-h-0 flex-1 justify-center pt-[37px]">
              <div className="h-[116px] w-[11px] rounded-full border border-[#ababab] bg-[#efefef]" />
            </div>
            <ScrollBtn label="아래로" d="M1 3h7L4.500 6.500z" className="h-[17px]" />
            <ScrollBtn label="찾아가기" d="M0 0h9v9H0zM1 1v7h7V1zM2.500 2.500h4v4h-4zM3.500 3.500v2h2v-2z" className="mt-[2px] h-[17px] [&_path]:[fill-rule:evenodd]" />
            <ScrollBtn label="이전 쪽" d="M4.500 1L7 4H2zM4.500 5L7 8H2z" className="mt-[2px] h-[17px]" />
            <ScrollBtn label="다음 쪽" d="M2 1h5L4.500 4zM2 5h5L4.500 8z" className="-mt-px h-[17px]" />
          </div>
        </div>
        <TabBar />
      </div>
    </div>
  );
}

function TabBar() {
  return (
    <div className="flex h-[29px] shrink-0 border-t border-[#b0b0b0]">
      <div className="flex w-[481px] shrink-0">
        <button aria-label="문서 목록" className="ml-[14px]">
          <svg viewBox="0 0 11 13" className="h-[13px] w-[11px]" fill="#fff" stroke="#777">
            <path d="M.5.500h10v10H5l-1.500 2h-3z" />
          </svg>
        </button>
        <Rule className="ml-[9px] mt-[6px] h-[15px] !bg-[#aaa]" />
        <div className="flex items-center gap-[14px] pl-[10px] text-[#b4b4b4]">
          {[
            ["처음 탭", "M0 0h1v7H0zM6 0v7L2 3.500z"],
            ["이전 탭", "M5 0v7L1 3.500z"],
            ["다음 탭", "M2 0v7l4-3.500z"],
            ["마지막 탭", "M0 0v7l4-3.500zM5 0h1v7H5z"],
          ].map(([label, d]) => (
            <button key={label} aria-label={label}>
              <svg viewBox="0 0 7 7" className="size-[7px]" fill="currentColor">
                <path d={d} />
              </svg>
            </button>
          ))}
        </div>
        <div className="relative ml-2 h-6 w-[98px]">
          <svg viewBox="0 0 98 25" className="absolute left-0 top-0 h-[25px] w-[98px]">
            <path d="M.5 0l7 20q1.500 4 4 4h75q3 0 4.500-4L98 0z" fill="#fff" />
            <path d="M.5 0l7 20q1.500 4 4 4h75q3 0 4.500-4L98 0" fill="none" stroke="#ababab" />
          </svg>
          <button className="relative h-6 w-full pr-1 text-[#3566c8]">빈 문서 1</button>
        </div>
        <div className="relative -ml-px h-6 w-[38px]">
          <svg viewBox="0 0 38 25" className="absolute left-0 top-0 h-[25px] w-[38px]">
            <path d="M0 4l5.500 16q1.500 4 4 4h20q3 0 4-4L38 0H2z" fill="#e9e9e9" />
            <path d="M0 4l5.500 16q1.500 4 4 4h20q3 0 4-4L38 0" fill="none" stroke="#ababab" />
          </svg>
          <button aria-label="새 탭" className="relative flex h-6 w-full items-center justify-center">
            <svg viewBox="0 0 10 10" className="size-[10px]">
              <path d="M5 0v10M0 5h10" stroke="#6a6a6a" strokeWidth="2" />
            </svg>
          </button>
        </div>
      </div>
      <svg className="h-7 w-1 shrink-0" stroke="#8a8a8a" strokeDasharray="1 1">
        <path d="M.5 0v28M2.500 0v28" />
      </svg>
      <div className="mb-[6px] ml-[2px] mr-[18px] mt-[6px] flex flex-1 items-stretch">
        <div className="flex flex-1 bg-[#d0d0d0]">
          <ScrollBtn label="왼쪽으로" d="M6.500 1v7L3 4.500z" className="w-[17px]" />
          <div className="flex flex-1 items-center pl-[54px] pr-[47px]">
            <div className="h-[11px] w-full rounded-full border border-[#ababab] bg-[#efefef]" />
          </div>
          <ScrollBtn label="오른쪽으로" d="M3 1v7l3.500-3.500z" className="w-[17px]" />
        </div>
        <ScrollBtn label="가로 나누기" d="M3.500 0h2v9h-2z" className="ml-[2px] w-[10px]" />
      </div>
    </div>
  );
}

/* ---------- status bar ---------- */

function StatusBar() {
  const cell = "flex h-full items-center whitespace-nowrap";
  return (
    <footer className="flex h-6 shrink-0 items-center text-[#555]">
      <span className={`${cell} w-[98px] gap-5 pl-5`}>
        <span>1/1쪽</span>
        <span>1단</span>
      </span>
      <Rule className="h-[22px]" />
      <span className={`${cell} w-[84px] gap-[19px] pl-3`}>
        <span>1줄</span>
        <span>27칸</span>
      </span>
      <Rule className="h-[22px]" />
      <span className={`${cell} w-[57px] justify-center`}>10글자</span>
      <Rule className="h-[22px]" />
      <span className={`${cell} w-[68px] justify-center`}>문자 입력</span>
      <Rule className="h-[22px]" />
      <span className={`${cell} w-[65px] justify-center`}>1/1 구역</span>
      <Rule className="h-[22px]" />
      <span className={`${cell} w-[43px] justify-center`}>삽입</span>
      <Rule className="h-[22px]" />
      <button className={`${cell} w-[128px] justify-center text-[#2c56c4]`}>변경 내용 [기록 중지]</button>
      <Rule className="h-[22px]" />
      <div className="ml-auto flex h-full items-center">
        <button aria-label="쪽 윤곽" className="flex size-5 items-center justify-center border border-[#93a9e0] bg-[#dbe4fa]">
          <svg viewBox="0 0 13 13" className="size-[13px]" fill="#fff" stroke="#666">
            <path d="M.5.500h12v12H.500zM2.500 12.500v-9h8v9" />
          </svg>
        </button>
        <button aria-label="폭 맞춤" className="ml-[11px]">
          <svg viewBox="0 0 13 13" className="size-[13px]" fill="#fff" stroke="#777">
            <path d="M4 .5H.5v12H4M9 .5h3.500v12H9M4.500.500h4M4.500 12.500h4" />
            <path d="M2 6.500L5 4.500v4zM11 6.500L8 4.500v4z" fill="#555" stroke="none" />
          </svg>
        </button>
        <button aria-label="전체 화면 보기" className="ml-[15px]">
          <svg viewBox="0 0 13 13" className="size-[13px]" fill="#fff" stroke="#3d5a9c">
            <path d="M.5.500h12v12H.500z" />
            <path d="M3.500 3.500h6v6h-6z" fill="#888" stroke="#555" />
          </svg>
        </button>
        <Rule className="ml-[14px] mr-[14px] h-[13px]" />
        <button aria-label="축소">
          <svg viewBox="0 0 13 13" className="size-[13px]" fill="#fff" stroke="#999">
            <path d="M.5.500h12v12H.500z" />
            <path d="M4.500 4.500h4v4h-4z" fill="#dbe4fa" stroke="#4a72c4" />
          </svg>
        </button>
        <input
          type="range"
          aria-label="확대/축소"
          min={0}
          max={100}
          defaultValue={56}
          className="ml-[13px] h-[2px] w-[88px] appearance-none bg-[#5a78c8] [&::-webkit-slider-thumb]:size-[10px] [&::-webkit-slider-thumb]:appearance-none [&::-webkit-slider-thumb]:rounded-full [&::-webkit-slider-thumb]:border [&::-webkit-slider-thumb]:border-[#777] [&::-webkit-slider-thumb]:bg-white"
        />
        <button aria-label="확대" className="ml-3">
          <svg viewBox="0 0 13 13" className="size-[13px]" fill="#fff" stroke="#999">
            <path d="M.5.500h12v12H.500z" />
            <path d="M2.500 2.500h8v8h-8z" fill="#dbe4fa" stroke="#4a72c4" />
          </svg>
        </button>
        <button className="ml-[19px] flex items-center gap-[7px]">
          <svg viewBox="0 0 15 15" className="size-[15px]" fill="#fff">
            <circle cx="5.500" cy="5.500" r="5" stroke="#777" />
            <path d="M9.500 9.500l4.500 4.500" stroke="#555" strokeWidth="2.500" />
          </svg>
          150%
        </button>
        <svg viewBox="0 0 14 14" className="ml-[14px] size-[14px] self-end">
          <path d="M0 14L14 0" stroke="#aaa" />
          <path d="M7 12l5-5v5z" fill="#999" />
        </svg>
      </div>
    </footer>
  );
}

export default function App() {
  return (
    <div className="h-screen min-h-[500px] bg-white pb-[6px] pl-[5px] pr-1 pt-[5px] font-['Noto_Sans_CJK_KR',sans-serif] text-[12px] leading-4 text-[#333]">
      <div className="flex h-full flex-col overflow-hidden border border-[#808080] bg-[#fafafa]">
        <TitleBar />
        <MenuBar />
        <Ribbon />
        <Toolbar />
        <Workspace />
        <StatusBar />
      </div>
    </div>
  );
}
